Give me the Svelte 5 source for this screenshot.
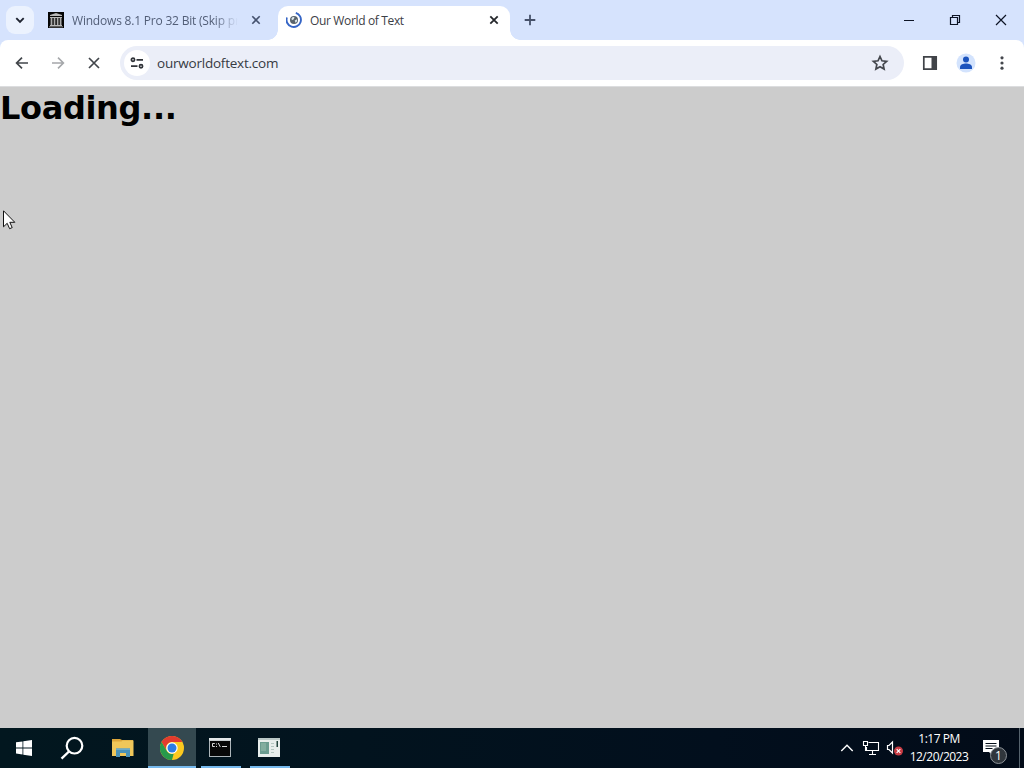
<!-- Desktop with a browser window that is still loading, and the taskbar -->
<script lang="ts">
  interface Props {
    title?: string;
    url?: string;
    time?: string;
    date?: string;
  }

  let {
    title = 'Our World of Text',
    url = 'ourworldoftext.com',
    time = '1:17 PM',
    date = '12/20/2023'
  }: Props = $props();
</script>

<div class="desktop">
  <header class="tabstrip">
    <button class="tab-search" aria-label="Search tabs">
      <svg width="28" height="28" viewBox="0 0 28 28"><path d="M10.3 12.2l3.7 3.7 3.7-3.7" fill="none" stroke="#1f2430" stroke-width="1.9" /></svg>
    </button>
    <div class="tab">
      <svg class="favicon" width="16" height="16" viewBox="0 0 16 16">
        <path fill="#050505" d="M0 0h16v16H0z" />
        <path fill="#b8b8b8" d="M8 1l6 2v1H2V3zM2 5h12v1H2zM2 13h12v1H2zM1 14.500h14v.7H1z" />
        <path fill="#aaa" d="M2.6 6h1.8v7H2.6zM5.7 6h1.7v7H5.7zM8.8 6h1.7v7H8.8zM11.7 6h1.8v7h-1.8z" />
      </svg>
      <span class="label faded">Windows 8.1 Pro 32 Bit (Skip pr</span>
      <svg class="close" width="16" height="16" viewBox="0 0 16 16"><path d="M4.300 4.300l7.400 7.400M11.700 4.300l-7.400 7.400" stroke="#45526e" stroke-width="1.600" /></svg>
    </div>
    <div class="tab active">
      <svg class="favicon" width="16" height="16" viewBox="0 0 16 16">
        <circle cx="8" cy="8" r="4" fill="#58636c" />
        <path d="M5.500 6.300c1-1.500 2.500-1.600 3.100-.8L7.500 7.400l-1.700.8zM8.700 8.500l2.300-1.300c.4 1.800-.2 2.900-1.500 3.600z" fill="#dbe5e8" />
        <path d="M9.800.900A7.200 7.200 0 1 1 .9 5.500" fill="none" stroke="#3565c6" stroke-width="1.900" />
      </svg>
      <span class="label">{title}</span>
      <svg class="close" width="16" height="16" viewBox="0 0 16 16"><path d="M4.300 4.300l7.400 7.400M11.700 4.300l-7.400 7.400" stroke="#24272b" stroke-width="1.800" /></svg>
    </div>
    <button class="new-tab" aria-label="New tab">
      <svg width="16" height="16" viewBox="0 0 16 16"><path d="M8 2.700v10.600M2.700 8h10.600" stroke="#46516a" stroke-width="1.800" /></svg>
    </button>
    <div class="window-controls">
      <svg width="46" height="40" viewBox="0 0 46 40"><path d="M18 20.500h10" stroke="#0d1425" /></svg>
      <svg width="46" height="40" viewBox="0 0 46 40"><path d="M18.500 17.500h7v7h-7zM20.500 17v-1.500h7v7H26" fill="none" stroke="#0d1425" stroke-width="1.200" /></svg>
      <svg width="46" height="40" viewBox="0 0 46 40"><path d="M18 15l10 10M28 15L18 25" stroke="#0d1425" stroke-width="1.200" /></svg>
    </div>
  </header>

  <nav class="toolbar">
    <div class="nav-buttons">
      <svg width="36" height="36" viewBox="0 0 36 36"><path d="M24 18H13M18 12.600L12.600 18l5.400 5.400" fill="none" stroke="#42464b" stroke-width="1.700" /></svg>
      <svg width="36" height="36" viewBox="0 0 36 36"><path d="M12 18h11M18 12.600l5.400 5.400-5.400 5.400" fill="none" stroke="#a5a7aa" stroke-width="1.600" /></svg>
      <svg width="36" height="36" viewBox="0 0 36 36"><path d="M13 13l10 10M23 13L13 23" stroke="#42464b" stroke-width="1.700" /></svg>
    </div>
    <div class="omnibox">
      <span class="site-info">
        <svg width="16" height="16" viewBox="0 0 16 16" fill="none" stroke="#303338" stroke-width="1.700"><path d="M7.500 4.800H14M2 11.200h6.500" /><circle cx="4" cy="4.800" r="1.600" /><circle cx="12" cy="11.200" r="1.600" /></svg>
      </span>
      <span class="url">{url}</span>
      <svg class="star" width="20" height="20" viewBox="0 0 20 20"><path d="M10 3.500l1.950 4.300 4.700.5-3.500 3.150.95 4.650L10 13.700 5.900 16.100l.95-4.650-3.500-3.150 4.700-.5z" fill="none" stroke="#44474d" stroke-width="1.700" /></svg>
    </div>
    <div class="actions">
      <svg width="36" height="36" viewBox="0 0 36 36"><path d="M11.800 11.800h12.400v12.400H11.800z" fill="none" stroke="#404348" stroke-width="1.700" /><path d="M19.500 11H25v14h-5.500z" fill="#404348" /></svg>
      <svg width="36" height="36" viewBox="0 0 36 36"><circle cx="18" cy="18" r="9.500" fill="#d3e3fd" /><circle cx="18" cy="14.600" r="3" fill="#1b53bd" /><path d="M12 24v-1.800c0-2.600 3.500-3.600 6-3.600s6 1 6 3.600V24z" fill="#1b53bd" /></svg>
      <svg width="36" height="36" viewBox="0 0 36 36" fill="#44474d"><circle cx="18" cy="12.800" r="1.600" /><circle cx="18" cy="18" r="1.600" /><circle cx="18" cy="23.200" r="1.600" /></svg>
    </div>
  </nav>

  <main>
    <h1>Loading...</h1>
  </main>

  <footer class="taskbar">
    <div class="task start">
      <svg width="16" height="16" viewBox="0 0 16 16"><path fill="#fff" d="M0 2.300l6.500-.9v6.100H0zM7.300 1.300L16 0v7.500H7.300zM0 8.400h6.500v6.100L0 13.600zM7.300 8.400H16V16l-8.700-1.300z" /></svg>
    </div>
    <div class="task search">
      <svg width="24" height="24" viewBox="0 0 24 24"><circle cx="14.500" cy="9.700" r="7.800" fill="none" stroke="#fff" stroke-width="2.200" /><path d="M9 15.500L1.500 22.700" stroke="#fff" stroke-width="2.400" /></svg>
    </div>
    <div class="task">
      <svg width="22" height="20" viewBox="0 0 22 20"><path fill="#dda63a" d="M0 1h8l2 1h11v3H0z" /><path fill="#f0c75a" d="M0 3.500h9.500l1-1h11V18H0z" /><path fill="#4a92b8" d="M4 10.500h14V19h-4v-4H8v4H4z" /><path fill="#6daccb" d="M4 10.500h14V12H4z" /></svg>
    </div>
    <div class="task open focused">
      <svg width="24" height="24" viewBox="0 0 24 24">
        <circle cx="12" cy="12" r="12" fill="#fbc91f" />
        <path fill="#e33b2e" d="M1.600 6A12 12 0 0 1 22.400 6H12a6 6 0 0 0-5.200 9z" />
        <path fill="#279a4b" d="M1.600 6l5.200 9A6 6 0 0 0 12 18l1.700-.2L12 24A12 12 0 0 1 1.600 6z" />
        <circle cx="12" cy="12" r="5.700" fill="#fff" /><circle cx="12" cy="12" r="4.500" fill="#2c7ce5" />
      </svg>
    </div>
    <div class="task open">
      <svg width="24" height="20" viewBox="0 0 24 20"><path fill="#aeb6ba" d="M1 0h22v19H1z" /><path fill="#e4e8e9" d="M1 0h22v2.500H1z" /><path fill="#080808" d="M2 3h20v15H2z" /><path d="M6.800 5.500H4.500v3h2.300M8.500 5.500v1M8.500 8v1M10.300 5l2 4M14 8.500h5" fill="none" stroke="#d8d8d8" /></svg>
    </div>
    <div class="task open">
      <svg width="24" height="20" viewBox="0 0 24 20"><path fill="#e8eeec" d="M1 0h22v19H1z" /><path fill="#b9c7c6" d="M1 0h22v2H1z" /><path fill="#6b9c90" d="M3 4h9v12H3z" /><path fill="#82ad9f" d="M4 5h5v8H4z" /><path d="M14 5.500h3M14 8.500h3M14 11.500h3M14 14.500h3" stroke="#b4c6c0" /><path fill="#25463f" d="M19.500 3H21v6h-1.500z" /></svg>
    </div>
    <div class="tray">
      <svg class="chevron" width="14" height="10" viewBox="0 0 14 10"><path d="M1.300 8L7 2.300 12.700 8" fill="none" stroke="#fff" stroke-width="1.400" /></svg>
      <svg class="network" width="18" height="16" viewBox="0 0 18 16"><path d="M6.500 2.500h10v8h-12V7M10.500 11v3M7 14.500h7M1.500 1.500h4v4h-4zM3.500 6v5" fill="none" stroke="#fff" stroke-width="1.100" /></svg>
      <svg class="volume" width="18" height="16" viewBox="0 0 18 16"><path d="M1.500 5.500H3L6.500 2v11L3 9.500H1.500z" fill="none" stroke="#fff" stroke-width="1.200" /><circle cx="12.500" cy="11" r="4.500" fill="#c83c44" /><path d="M10.700 9.200l3.600 3.600M14.300 9.200l-3.600 3.600" stroke="#fff" stroke-width="1.200" /></svg>
      <div class="clock"><span>{time}</span><span>{date}</span></div>
      <div class="notifications">
        <svg width="17" height="17" viewBox="0 0 17 17"><path fill="#fff" d="M0 0h16v12h-6v4l-4-4H0z" /><path d="M2.500 3.500h11M2.500 6h11M2.500 8.500h7" stroke="#06101a" /></svg>
        <span class="badge">1</span>
      </div>
      <span class="show-desktop"></span>
    </div>
  </footer>

  <svg class="cursor" width="13" height="20" viewBox="0 0 13 20"><path d="M.5.800v16l3.700-3.500 2.400 5.400 2.600-1.100-2.400-5.300h5z" fill="#fff" stroke="#111" /></svg>
</div>

<style>
:global(body) {
  margin: 0;
  overflow: hidden;
}
.desktop {
  width: 1024px;
  height: 768px;
  display: flex;
  flex-direction: column;
  position: relative;
  overflow: hidden;
  background: #d6e3fd;
  font-family: "Open Sans", "Noto Sans", sans-serif;
}
svg {
  display: block;
  flex: none;
}
button {
  border: 0;
  padding: 0;
  background: none;
}
.tabstrip {
  height: 40px;
  flex: none;
  display: flex;
  align-items: center;
}
.tab-search {
  width: 28px;
  height: 28px;
  margin-left: 6px;
  border-radius: 9px;
  background: #ebf2fe;
}
.tab {
  box-sizing: border-box;
  width: 232px;
  height: 34px;
  margin-top: 6px;
  margin-left: 6px;
  padding: 0 8px;
  display: flex;
  align-items: center;
  position: relative;
  font-size: 12px;
  color: #525e77;
}
.tab .favicon,
.tab .close {
  margin-bottom: 6px;
}
.label {
  flex: 1;
  min-width: 0;
  height: 18px;
  margin: 0 8px 4px;
  line-height: 18px;
  white-space: nowrap;
  letter-spacing: -0.35px;
}
.faded {
  letter-spacing: -0.2px;
  mask-image: linear-gradient(to right, #000 142px, transparent 166px);
}
.tab.active {
  border-radius: 10px 10px 0 0;
  background: #fff;
  color: #3c4046;
}
/* curved feet that join the active tab to the toolbar */
.tab.active::before,
.tab.active::after {
  content: '';
  position: absolute;
  bottom: 0;
  width: 10px;
  height: 10px;
}
.tab.active::before {
  left: -10px;
  background: radial-gradient(circle at 0 0, transparent 9.5px, #fff 10px);
}
.tab.active::after {
  right: -10px;
  background: radial-gradient(circle at 100% 0, transparent 9.5px, #fff 10px);
}
.new-tab {
  margin-left: 12px;
}
.window-controls {
  display: flex;
  margin-left: auto;
}
.toolbar {
  box-sizing: border-box;
  height: 47px;
  flex: none;
  padding: 0 4px;
  display: flex;
  align-items: center;
  background: #fff;
  border-bottom: 1px solid #dcdddf;
  border-radius: 8px 8px 0 0;
}
.nav-buttons,
.actions {
  display: flex;
}
.actions {
  margin-left: auto;
}
.omnibox {
  box-sizing: border-box;
  width: 784px;
  height: 34px;
  margin-left: 8px;
  padding: 0 14px 0 4px;
  display: flex;
  align-items: center;
  border-radius: 17px;
  background: #ebeef8;
}
.site-info {
  width: 26px;
  height: 26px;
  display: flex;
  align-items: center;
  justify-content: center;
  border-radius: 50%;
  background: #fff;
}
.url {
  margin-left: 7px;
  font-size: 13.5px;
  line-height: 20px;
  letter-spacing: -0.22px;
  color: #363a42;
}
.star {
  margin-left: auto;
}
main {
  flex: 1;
  background: #ccc;
}
h1 {
  margin: 0;
  padding-top: 2px;
  font: bold 32px/39px "DejaVu Sans", sans-serif;
  letter-spacing: -0.35px;
  color: #000;
}
.taskbar {
  height: 40px;
  flex: none;
  display: flex;
  background: linear-gradient(to right, #02171f, #020f1d 70%, #020b18);
  color: #fff;
}
.task {
  width: 49px;
  display: flex;
  align-items: center;
  justify-content: center;
  position: relative;
}
.task.start {
  width: 48px;
}
.task.search {
  width: 48px;
  margin-right: 2px;
}
.task.focused {
  width: 48px;
  margin-left: 1px;
  background: #344950;
}
.task.open::after {
  content: '';
  position: absolute;
  bottom: 0;
  left: 5px;
  right: 4px;
  height: 2px;
  background: #76b9ed;
}
.task.open:not(.focused) svg {
  margin-right: 2px;
}
.task.focused::after {
  left: 0;
  right: 0;
}
.tray {
  display: flex;
  align-items: center;
  margin-left: auto;
}
.network {
  margin-left: 8px;
}
.volume {
  margin-left: 6px;
}
.clock {
  width: 66px;
  margin-left: 2px;
  display: flex;
  flex-direction: column;
  align-items: center;
  font-size: 12px;
  line-height: 18px;
  letter-spacing: -0.5px;
}
.notifications {
  width: 36px;
  margin-left: 11px;
  position: relative;
}
.badge {
  box-sizing: border-box;
  position: absolute;
  top: 7px;
  left: 7px;
  width: 17px;
  height: 17px;
  border: 1px solid #8c9298;
  border-radius: 50%;
  background: #30363c;
  font-size: 12px;
  line-height: 15px;
  text-align: center;
}
.show-desktop {
  width: 4px;
  height: 40px;
  border-left: 1px solid #56636d;
}
.cursor {
  position: absolute;
  top: 210px;
  left: 3px;
}
</style>
